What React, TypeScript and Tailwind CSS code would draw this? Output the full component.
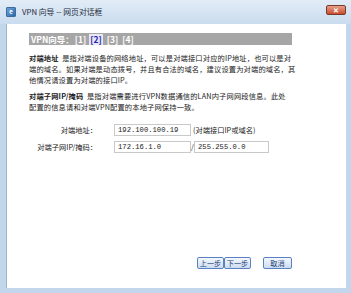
import React from 'react';

const cjk = { fontFamily: '"Noto Sans CJK SC", "Noto Sans", sans-serif' };
const mono = { fontFamily: '"Liberation Mono", "Noto Sans CJK SC", monospace' };

const Field: React.FC<{ value: string; width: string }> = ({ value, width }) => (
    <div className={`${width} h-[12px] border border-[#c9c9c9] bg-white flex items-center px-[3px] text-[7.2px] text-[#222]`} style={mono}>
        {value}
    </div>
);

const Btn: React.FC<{ label: string; width: string }> = ({ label, width }) => (
    <div className={`${width} h-[12px] border border-[#5a82c2] rounded-[2px] bg-gradient-to-b from-[#f4f8fd] to-[#cddcf1] flex items-center justify-center text-[7.2px] text-[#1c3f7a]`}>
        {label}
    </div>
);

export default function App() {
    return (
        <div className="w-[351px] h-[293px] bg-[#c3d7ec] flex flex-col overflow-hidden" style={cjk}>
            {/* Title bar */}
            <div className="h-[24px] shrink-0 flex items-center pl-[6px] pr-[5px] bg-gradient-to-b from-[#e2ecf7] to-[#cadcef]">
                <div className="w-[10px] h-[10px] rounded-[1px] bg-gradient-to-br from-[#6fa3d8] to-[#2d6aa9] border border-[#3c6d9e] flex items-center justify-center">
                    <span className="text-[6px] leading-none text-white font-bold">e</span>
                </div>
                <span className="ml-[6px] text-[7.8px] text-[#1e2a3a]">VPN 向导 -- 网页对话框</span>
                <div className="ml-auto mt-[-4px] w-[20px] h-[10px] rounded-[2px] border border-[#7a3a2a] bg-gradient-to-b from-[#e8a08a] to-[#c8482e] flex items-center justify-center">
                    <span className="text-[7px] leading-none text-white font-bold">✕</span>
                </div>
            </div>

            {/* Content */}
            <div className="flex-1 ml-[6px] mr-[5px] mb-[5px] bg-white border-l border-[#9fb4cc] pt-[9px] pl-[22px] flex flex-col text-[7.25px] leading-[11px] text-[#222]">
                <div className="w-[263px] h-[12px] bg-[#a6a6a6] flex items-center pl-[2px] text-[8.5px] font-bold text-white">
                    <span>VPN向导：</span>
                    <span className="ml-[1px]">[1]</span>
                    <span className="ml-[3px] px-[1px] bg-[#e8e8f4] text-[#2323b0]">[2]</span>
                    <span className="ml-[4px]">[3]</span>
                    <span className="ml-[4px]">[4]</span>
                </div>

                <p className="mt-[8px] w-[270px] tracking-[0.15px]">
                    <b>对端地址</b>&nbsp;&nbsp;是指对端设备的网络地址，可以是对端接口对应的IP地址，也可以是对<br />
                    端的域名。如果对端是动态拨号，并且有合法的域名，建议设置为对端的域名，其<br />
                    他情况请设置为对端的接口IP。
                </p>

                <p className="mt-[5px] w-[270px] tracking-[0.15px]">
                    <b>对端子网IP/掩码</b>&nbsp;&nbsp;是指对端需要进行VPN数据通信的LAN内子网网段信息。此处<br />
                    配置的信息请和对端VPN配置的本地子网保持一致。
                </p>

                <div className="mt-[11px] flex flex-col gap-[5px]">
                    <div className="flex items-center">
                        <span className="w-[70px] text-right pr-[2px]">对端地址：</span>
                        <span className="w-[15px]" />
                        <Field value="192.100.100.19" width="w-[77px]" />
                        <span className="ml-[2px]">(对端接口IP或域名)</span>
                    </div>
                    <div className="flex items-center">
                        <span className="w-[70px] text-right pr-[2px]">对端子网IP/掩码：</span>
                        <span className="w-[15px]" />
                        <Field value="172.16.1.0" width="w-[77px]" />
                        <span className="w-[3px] text-center">/</span>
                        <Field value="255.255.0.0" width="w-[75px]" />
                    </div>
                </div>

                <div className="mt-auto mb-[19px] flex items-center pl-[168px]">
                    <Btn label="上一步" width="w-[27px]" />
                    <Btn label="下一步" width="w-[27px]" />
                    <span className="w-[12px]" />
                    <Btn label="取消" width="w-[29px]" />
                </div>
            </div>
        </div>
    );
}
